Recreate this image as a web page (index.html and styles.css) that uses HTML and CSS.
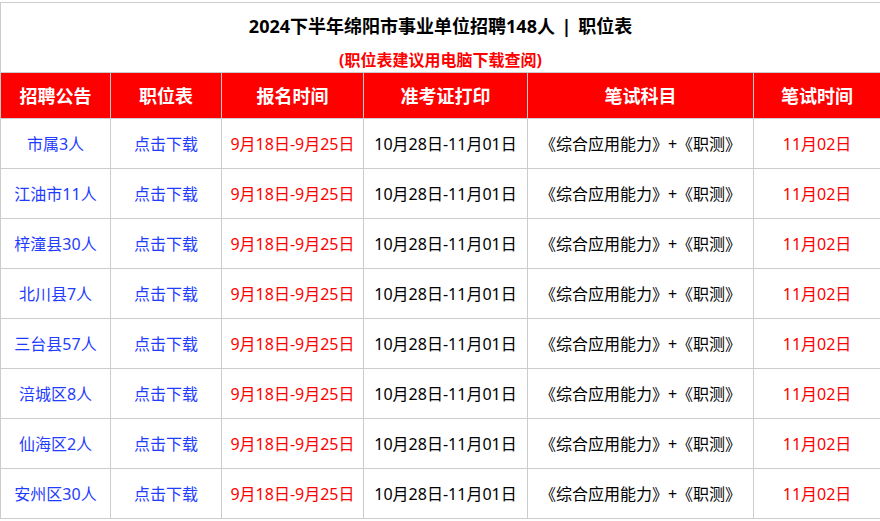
FILE: index.html
```html
<!DOCTYPE html>
<html lang="zh-CN">
<head>
<meta charset="utf-8">
<title>2024下半年绵阳市事业单位招聘148人 | 职位表</title>
<link rel="stylesheet" href="styles.css">
</head>
<body>
<table class="jobs">
  <colgroup>
    <col class="c1"><col class="c2"><col class="c3"><col class="c4"><col class="c5"><col class="c6">
  </colgroup>
  <thead>
    <tr class="title-row">
      <td colspan="6">
        <div class="title-box">
          <div class="title">2024下半年绵阳市事业单位招聘148人 | 职位表</div>
          <div class="subtitle">(职位表建议用电脑下载查阅)</div>
        </div>
      </td>
    </tr>
    <tr class="head-row">
      <th>招聘公告</th><th>职位表</th><th>报名时间</th><th>准考证打印</th><th>笔试科目</th><th>笔试时间</th>
    </tr>
  </thead>
  <tbody>
    <tr><td class="blue">市属3人</td><td class="blue">点击下载</td><td class="red">9月18日-9月25日</td><td>10月28日-11月01日</td><td>《综合应用能力》+《职测》</td><td class="red">11月02日</td></tr>
    <tr><td class="blue">江油市11人</td><td class="blue">点击下载</td><td class="red">9月18日-9月25日</td><td>10月28日-11月01日</td><td>《综合应用能力》+《职测》</td><td class="red">11月02日</td></tr>
    <tr><td class="blue">梓潼县30人</td><td class="blue">点击下载</td><td class="red">9月18日-9月25日</td><td>10月28日-11月01日</td><td>《综合应用能力》+《职测》</td><td class="red">11月02日</td></tr>
    <tr><td class="blue">北川县7人</td><td class="blue">点击下载</td><td class="red">9月18日-9月25日</td><td>10月28日-11月01日</td><td>《综合应用能力》+《职测》</td><td class="red">11月02日</td></tr>
    <tr><td class="blue">三台县57人</td><td class="blue">点击下载</td><td class="red">9月18日-9月25日</td><td>10月28日-11月01日</td><td>《综合应用能力》+《职测》</td><td class="red">11月02日</td></tr>
    <tr><td class="blue">涪城区8人</td><td class="blue">点击下载</td><td class="red">9月18日-9月25日</td><td>10月28日-11月01日</td><td>《综合应用能力》+《职测》</td><td class="red">11月02日</td></tr>
    <tr><td class="blue">仙海区2人</td><td class="blue">点击下载</td><td class="red">9月18日-9月25日</td><td>10月28日-11月01日</td><td>《综合应用能力》+《职测》</td><td class="red">11月02日</td></tr>
    <tr><td class="blue">安州区30人</td><td class="blue">点击下载</td><td class="red">9月18日-9月25日</td><td>10月28日-11月01日</td><td>《综合应用能力》+《职测》</td><td class="red">11月02日</td></tr>
  </tbody>
</table>
</body>
</html>
```
FILE: styles.css
```css
html, body {
  margin: 0;
  padding: 0;
  background: #ffffff;
}
body {
  padding-top: 2px;
  font-family: "Noto Sans", "Noto Sans CJK SC", sans-serif;
  color: #000;
}
.jobs {
  width: 880px;
  border-collapse: collapse;
  table-layout: fixed;
}
.c1 { width: 110px; }
.c2 { width: 111px; }
.c3 { width: 142px; }
.c4 { width: 164px; }
.c5 { width: 226px; }
.c6 { width: 127px; }
.jobs td, .jobs th {
  border: 1px solid #cccccc;
  padding: 0;
  text-align: center;
  vertical-align: middle;
  font-size: 16px;
  white-space: nowrap;
}
.title-row td {
  height: 69px;
  vertical-align: top;
}
.title-box {
  display: flex;
  flex-direction: column;
  align-items: center;
  padding-top: 8px;
}
.title {
  font-size: 18px;
  font-weight: bold;
  line-height: 30px;
  color: #000;
  word-spacing: 2px;
}
.subtitle {
  margin-top: 7px;
  font-size: 16px;
  font-weight: bold;
  line-height: 24px;
  color: #ff0000;
}
.head-row th {
  height: 45px;
  background: #ff0000;
  color: #ffffff;
  font-size: 18px;
  font-weight: bold;
  line-height: 24px;
}
tbody td {
  height: 49px;
  line-height: 22px;
  padding-bottom: 1px;
}
.blue { color: #1f3cff; }
.red { color: #ff0000; }
```
